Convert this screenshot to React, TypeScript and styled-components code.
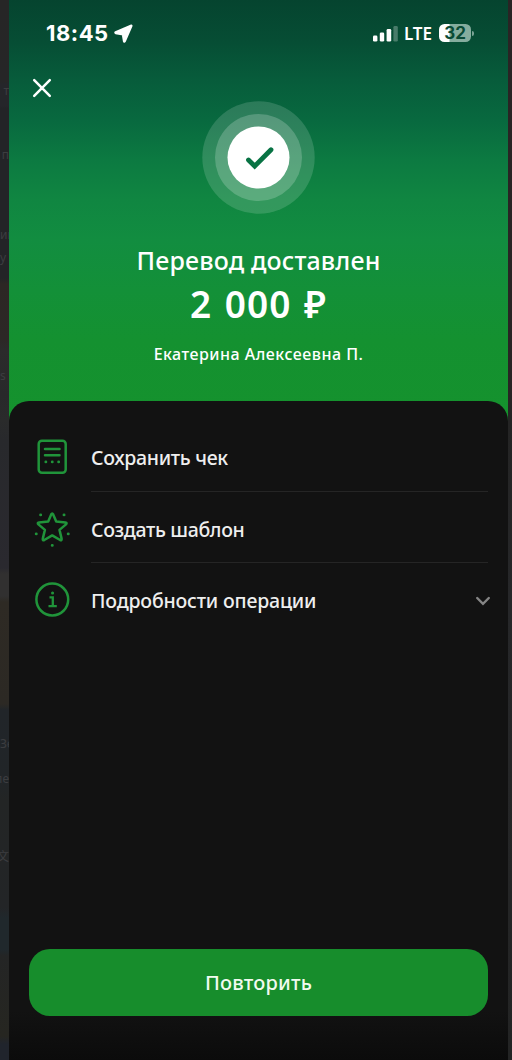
import React from 'react';
import styled, { createGlobalStyle } from 'styled-components';

const GlobalStyle = createGlobalStyle`
  * { box-sizing: border-box; }
  body { margin: 0; background: #111; }
`;

const Screen = styled.div`
  display: flex;
  width: 512px;
  height: 1060px;
  overflow: hidden;
  font-family: 'Noto Sans', 'Noto Sans CJK SC', sans-serif;
  font-weight: 500;
  color: #fff;
`;

const LeftEdge = styled.aside`
  width: 9px;
  overflow: hidden;
  background: linear-gradient(
    180deg,
    #262626 0, #262627 82px, #25262a 84px, #25262a 106px, #232427 108px, #232427 278px,
    #2c2724 284px, #2c2826 340px, #2b2b2b 350px, #28292a 395px, #2a2b2b 420px, #28292c 440px,
    #2a292f 568px, #313030 574px, #313030 596px, #2e2a24 602px, #2c2924 704px,
    #212529 710px, #212528 780px, #232525 800px, #232527 908px, #20282c 918px, #20282c 950px,
    #242525 956px, #262621 1036px, #20242c 1044px, #20242c 1060px
  );
`;

const Fragment = styled.div<{ $gap: number; $start?: boolean }>`
  margin-top: ${(p) => p.$gap}px;
  height: 16px;
  display: flex;
  justify-content: ${(p) => (p.$start ? 'flex-start' : 'flex-end')};
  font-size: 12px;
  line-height: 16px;
  font-weight: 400;
  white-space: nowrap;
  color: #3c3d40;
`;

const RightEdge = styled.aside`
  width: 4px;
  background: linear-gradient(180deg, #292424 0, #292424 390px, #242424 420px, #262729 600px, #232424 1060px);
`;

const Phone = styled.main`
  width: 499px;
  display: flex;
  flex-direction: column;
  background: #17922f;
`;

const Hero = styled.header`
  height: 421px;
  flex: none;
  margin-bottom: -20px;
  display: flex;
  flex-direction: column;
  background: linear-gradient(
    180deg,
    #05442f 0, #064d34 40px, #075c3b 80px, #08693f 120px, #0c7a41 160px,
    #108641 200px, #128d40 240px, #139038 290px, #149130 340px, #15922d 421px
  );
`;

const StatusBar = styled.div`
  height: 66px;
  flex: none;
  display: flex;
  align-items: center;
  justify-content: space-between;
  padding: 0 34px 0 37px;
`;

const StatusGroup = styled.div`
  display: flex;
  align-items: center;
`;

const Clock = styled.span`
  font-family: Inter, sans-serif;
  font-weight: 700;
  font-size: 22px;
  line-height: 26px;
  letter-spacing: 0.5px;
  margin-right: 5px;
`;

const Network = styled.span`
  font-size: 17px;
  line-height: 22px;
  font-weight: 600;
  margin: 2px 7px 0 6px;
`;

const Battery = styled.div`
  width: 32px;
  height: 18px;
  border-radius: 5.5px;
  display: flex;
  align-items: center;
  justify-content: center;
  background: linear-gradient(90deg, #fff 0, #fff 10px, #85ad9e 11px);
  color: #0a4b35;
  font: 700 17px/18px Inter, sans-serif;
`;

const BatteryTip = styled.div`
  width: 2px;
  height: 5px;
  margin-left: 1px;
  border-radius: 0 2px 2px 0;
  background: #7aa394;
`;

const CloseButton = styled.button`
  width: 20px;
  height: 20px;
  margin: 12px 0 0 23px;
  padding: 0;
  border: 0;
  background: none;
  flex: none;
  display: flex;
`;

const SuccessBadge = styled.div`
  width: 113px;
  height: 113px;
  margin: 3px auto 0;
  flex: none;
`;

const Title = styled.h1`
  margin: 28px 0 0;
  font-size: 25px;
  line-height: 36px;
  letter-spacing: 0.17px;
  font-weight: 500;
  text-align: center;
  white-space: nowrap;
`;

const Amount = styled.div`
  margin-top: 1px;
  font-size: 37px;
  line-height: 50px;
  font-weight: 600;
  letter-spacing: 1px;
  word-spacing: 2px;
  text-align: center;
`;

const Recipient = styled.div`
  margin-top: 13px;
  font-size: 16px;
  line-height: 24px;
  letter-spacing: 0.5px;
  text-align: center;
`;

const Sheet = styled.section`
  flex: 1;
  display: flex;
  flex-direction: column;
  padding: 19px 20px 44px;
  border-radius: 20px 20px 0 0;
  background: linear-gradient(180deg, #121212 0, #121212 610px, #0b0b0b 659px);
`;

const Row = styled.div`
  height: 71.7px;
  display: flex;
  align-items: center;
`;

const RowIcon = styled.div`
  width: 46px;
  height: 40px;
  padding-top: 1px;
  display: flex;
  justify-content: center;
  flex: none;

  svg { flex: none; }
`;

const RowBody = styled.div<{ $divider?: boolean }>`
  flex: 1;
  height: 100%;
  margin-left: 16px;
  padding-top: 5px;
  display: flex;
  align-items: center;
  justify-content: space-between;
  border-bottom: 1px solid ${(p) => (p.$divider ? '#252525' : 'transparent')};
`;

const Label = styled.span<{ $spacing?: number }>`
  font-size: 19.5px;
  line-height: 28px;
  color: #eee;
  letter-spacing: ${(p) => p.$spacing ?? 0}px;
`;

const Chevron = styled.svg`
  width: 16px;
  height: 12px;
  margin: -1px -3px 0 0;
`;

const RepeatButton = styled.button`
  height: 67px;
  margin-top: auto;
  border: 0;
  border-radius: 21px;
  background: #178d2c;
  color: #f1fbef;
  font: 500 20px/28px 'Noto Sans', sans-serif;
  letter-spacing: 0.2px;
`;

const green = '#20943a';

const edgeText: Array<{ text: string; gap: number; start?: boolean }> = [
  { text: 'т', gap: 83 },
  { text: 'п', gap: 48 },
  { text: 'ик', gap: 64, start: true },
  { text: 'у', gap: 7, start: true },
  { text: 's', gap: 102, start: true },
  { text: 'Зе', gap: 352, start: true },
  { text: 'ле', gap: 19 },
  { text: '文', gap: 62 },
];

export default function App() {
  return (
    <Screen>
      <GlobalStyle />
      <LeftEdge>
        {edgeText.map(({ text, gap, start }) => (
          <Fragment key={text} $gap={gap} $start={start}>{text}</Fragment>
        ))}
      </LeftEdge>
      <Phone>
        <Hero>
          <StatusBar>
            <StatusGroup>
              <Clock>18:45</Clock>
              <svg width="19" height="19" viewBox="0 0 19 19">
                <path d="M17 2 1.8 8.7 9.2 10.1 10.4 17.2Z" fill="#fff" stroke="#fff" strokeWidth="3" strokeLinejoin="round" />
              </svg>
            </StatusGroup>
            <StatusGroup>
              <svg width="25" height="17" viewBox="0 0 25 17" fill="#fff">
                <rect x="0" y="10.5" width="4.4" height="6" rx="1.3" />
                <rect x="6.8" y="7.5" width="4.4" height="9" rx="1.3" />
                <rect x="13.6" y="4" width="4.6" height="12.5" rx="1.3" />
                <rect x="20.4" y="1" width="4.4" height="15.5" rx="1.3" opacity=".27" />
              </svg>
              <Network>LTE</Network>
              <Battery>32</Battery>
              <BatteryTip />
            </StatusGroup>
          </StatusBar>
          <CloseButton aria-label="Закрыть">
            <svg width="20" height="20" viewBox="0 0 20 20">
              <path d="M2.2 2.2 17.8 17.8M17.8 2.2 2.2 17.8" stroke="#fff" strokeWidth="2.5" strokeLinecap="round" />
            </svg>
          </CloseButton>
          <SuccessBadge>
            <svg width="113" height="113" viewBox="0 0 113 113">
              <circle cx="56.5" cy="56.5" r="56.2" fill="#fff" opacity=".15" />
              <circle cx="56.5" cy="56.5" r="43.5" fill="#fff" opacity=".2" />
              <circle cx="56.5" cy="56.5" r="31" fill="#fff" />
              <path d="M46.5 59 52.7 65.2 69 48.8" fill="none" stroke="#087344" strokeWidth="4.8" strokeLinecap="round" strokeLinejoin="miter" />
            </svg>
          </SuccessBadge>
          <Title>Перевод доставлен</Title>
          <Amount>2 000 ₽</Amount>
          <Recipient>Екатерина Алексеевна П.</Recipient>
        </Hero>
        <Sheet>
          <Row>
            <RowIcon>
              <svg width="40" height="40" viewBox="0 0 40 40" fill="none" stroke={green} strokeWidth="2.5">
                <rect x="6.7" y="3.7" width="27" height="32" rx="3.2" />
                <path d="M13 12.1H27.5M13 18.3H27.5" strokeLinecap="round" />
                <path d="M13.8 24.9h.1M20.2 24.9h.1M26.6 24.9h.1" strokeWidth="2.8" strokeLinecap="round" />
              </svg>
            </RowIcon>
            <RowBody $divider><Label $spacing={-0.3}>Сохранить чек</Label></RowBody>
          </Row>
          <Row>
            <RowIcon>
              <svg width="40" height="40" viewBox="0 0 40 40" fill="none" stroke={green} strokeWidth="2.5" strokeLinejoin="round" strokeLinecap="round">
                <path d="M19.2 5.4Q20.2 3.4 21.2 5.4L24.2 12.5 33.4 13.5Q35.5 13.9 34 15.4L27.5 20.9 29.6 29.6Q29.9 31.8 28.1 31L20.2 26.4 12.3 31Q10.4 31.8 10.8 29.6L12.9 20.9 6.4 15.4Q4.9 13.9 7 13.5L16.2 12.5Z" />
                <path d="M8.6 5.9h.1M32 5.9h.1M4.2 24.9h.1M36.2 24.9h.1M20.2 36.4h.1" strokeWidth="2.9" />
              </svg>
            </RowIcon>
            <RowBody $divider><Label $spacing={-0.35}>Создать шаблон</Label></RowBody>
          </Row>
          <Row>
            <RowIcon>
              <svg width="40" height="40" viewBox="0 0 40 40" fill="none" stroke={green} strokeWidth="2.5">
                <circle cx="20.3" cy="19.5" r="15.9" />
                <path d="M17.5 17.3H20.8V26M16.5 26.2H24.8" strokeWidth="2.3" />
                <path d="M20.5 13h.1" strokeWidth="3" strokeLinecap="round" />
              </svg>
            </RowIcon>
            <RowBody>
              <Label $spacing={-0.18}>Подробности операции</Label>
              <Chevron viewBox="0 0 16 12">
                <path d="M2.2 3 8 8.8 13.8 3" fill="none" stroke="#858585" strokeWidth="2.4" strokeLinecap="round" />
              </Chevron>
            </RowBody>
          </Row>
          <RepeatButton>Повторить</RepeatButton>
        </Sheet>
      </Phone>
      <RightEdge />
    </Screen>
  );
}
